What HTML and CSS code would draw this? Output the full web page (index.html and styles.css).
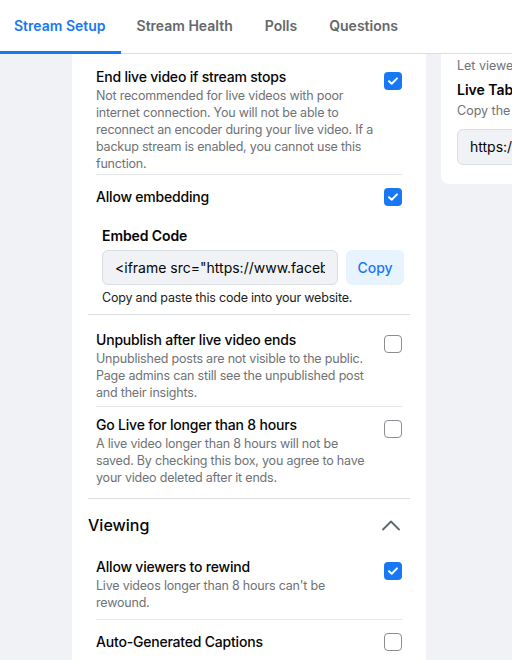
FILE: index.html
```html
<!DOCTYPE html>
<html lang="en">
  <head>
    <meta charset="UTF-8" />
    <meta name="viewport" content="width=device-width, initial-scale=1.0" />
    <title>Live Producer</title>
    <link rel="stylesheet" href="styles.css">
  </head>
  <body>
    <nav class="tabs">
      <a class="tab active" href="#">Stream Setup</a>
      <a class="tab" href="#">Stream Health</a>
      <a class="tab" href="#">Polls</a>
      <a class="tab" href="#">Questions</a>
    </nav>

    <div class="page">
      <main class="card main-card">
        <section class="group">
          <div class="setting first">
            <div class="setting-text">
              <div class="setting-title">End live video if stream stops</div>
              <p class="setting-desc">Not recommended for live videos with poor internet connection. You will not be able to reconnect an encoder during your live video. If a backup stream is enabled, you cannot use this function.</p>
            </div>
            <span class="check on">
              <svg viewBox="0 0 18 18" width="18" height="18"><path d="M5 9.3l2.7 2.5L13 6.4" fill="none" stroke="#fff" stroke-width="2" stroke-linecap="round" stroke-linejoin="round"/></svg>
            </span>
          </div>

          <div class="setting stacked">
            <div class="setting-head">
              <div class="setting-title">Allow embedding</div>
              <span class="check on">
                <svg viewBox="0 0 18 18" width="18" height="18"><path d="M5 9.3l2.7 2.5L13 6.4" fill="none" stroke="#fff" stroke-width="2" stroke-linecap="round" stroke-linejoin="round"/></svg>
              </span>
            </div>
            <div class="embed">
              <label class="embed-label" for="embedCode">Embed Code</label>
              <div class="embed-row">
                <input class="embed-input" id="embedCode" type="text" readonly value='<iframe src="https://www.facebook.com/plugins/video.php?href=https%3A%2F%2Fwww.facebook.com%2F" width="1280" height="720"></iframe>' />
                <button class="copy-btn" type="button">Copy</button>
              </div>
              <p class="embed-help">Copy and paste this code into your website.</p>
            </div>
          </div>
        </section>

        <section class="group">
          <div class="setting unpublish">
            <div class="setting-text">
              <div class="setting-title">Unpublish after live video ends</div>
              <p class="setting-desc">Unpublished posts are not visible to the public. Page admins can still see the unpublished post and their insights.</p>
            </div>
            <span class="check"></span>
          </div>

          <div class="setting longer">
            <div class="setting-text">
              <div class="setting-title">Go Live for longer than 8 hours</div>
              <p class="setting-desc">A live video longer than 8 hours will not be saved. By checking this box, you agree to have your video deleted after it ends.</p>
            </div>
            <span class="check"></span>
          </div>
        </section>

        <section class="group open">
          <div class="group-head">
            <h2 class="group-title">Viewing</h2>
            <svg class="chevron" viewBox="0 0 20 12" width="20" height="12"><path d="M2 10.5L10 2.5l8 8" fill="none" stroke="#606770" stroke-width="1.8" stroke-linecap="round" stroke-linejoin="round"/></svg>
          </div>

          <div class="setting">
            <div class="setting-text">
              <div class="setting-title">Allow viewers to rewind</div>
              <p class="setting-desc">Live videos longer than 8 hours can't be rewound.</p>
            </div>
            <span class="check on">
              <svg viewBox="0 0 18 18" width="18" height="18"><path d="M5 9.3l2.7 2.5L13 6.4" fill="none" stroke="#fff" stroke-width="2" stroke-linecap="round" stroke-linejoin="round"/></svg>
            </span>
          </div>

          <div class="setting single">
            <div class="setting-text">
              <div class="setting-title">Auto-Generated Captions</div>
            </div>
            <span class="check"></span>
          </div>
        </section>
      </main>

      <aside class="card side-card">
        <p class="side-desc">Let viewers watch your live video on your Page's Live tab.</p>
        <div class="side-title">Live Tab URL</div>
        <p class="side-desc">Copy the link to share your Page's Live tab.</p>
        <div class="side-input">https://www.facebook.com/pg/yourpage/live_videos/</div>
      </aside>
    </div>
  </body>
</html>
```

FILE: styles.css
```css
body {
  margin: 0;
  height: 660px;
  overflow: hidden;
  background-color: #f0f2f5;
  font-family: Inter, "Helvetica Neue", Arial, sans-serif;
  color: #050505;
}

/* tabs */

.tabs {
  display: flex;
  height: 53px;
  background-color: #fff;
  border-bottom: 1px solid #dadde1;
}

.tab {
  display: flex;
  align-items: center;
  margin-bottom: -1px;
  padding: 0 16px;
  border-bottom: 3px solid transparent;
  font-size: 14px;
  font-weight: 600;
  color: #65676b;
  text-decoration: none;
}

.tab:first-child {
  padding-left: 14px;
  padding-right: 15px;
}

.tab.active {
  color: #1877f2;
  border-bottom-color: #1877f2;
}

/* layout */

.page {
  display: flex;
  align-items: flex-start;
  gap: 15px;
  padding-left: 72px;
}

.card {
  flex: none;
  box-sizing: border-box;
  background-color: #fff;
}

.main-card {
  width: 354px;
  min-height: 606px;
  padding: 0 16px;
}

.side-card {
  width: 320px;
  padding: 3px 16px 19px;
  border-radius: 0 0 8px 8px;
}

/* settings */

.group {
  border-bottom: 1px solid #dadde1;
}

.group.open {
  border-bottom: none;
}

.setting {
  display: flex;
  justify-content: space-between;
  gap: 6px;
  margin: 0 8px;
  padding: 12px 0 8px;
  border-bottom: 1px solid #e4e6eb;
}

.setting:last-child {
  border-bottom: none;
}

.setting.first {
  padding-top: 13px;
  padding-bottom: 2px;
}

.setting.unpublish {
  padding-top: 15px;
  padding-bottom: 5px;
}

.setting.longer {
  padding-top: 8px;
  padding-bottom: 12px;
}

.setting.single {
  align-items: center;
}

.setting.stacked {
  display: block;
}

.setting-head {
  display: flex;
  justify-content: space-between;
  align-items: center;
}

.setting-text {
  max-width: 282px;
}

.setting-title {
  font-size: 14px;
  line-height: 20px;
  font-weight: 500;
  letter-spacing: -0.2px;
}

.setting-desc {
  margin: 0;
  font-size: 12.5px;
  line-height: 17px;
  letter-spacing: -0.2px;
  color: #6f7276;
}

.check {
  flex: none;
  box-sizing: border-box;
  width: 18px;
  height: 18px;
  margin-top: 5px;
  border: 1.5px solid #8a8d91;
  border-radius: 4px;
}

.check.on {
  border: none;
  background-color: #1877f2;
}

.check svg {
  display: block;
}

.setting-head .check,
.setting.single .check {
  margin-top: 0;
}

/* embed code */

.embed {
  margin: 19px -2px 0 6px;
}

.embed-label {
  display: block;
  margin-bottom: 4px;
  font-size: 14px;
  line-height: 20px;
  font-weight: 600;
  letter-spacing: -0.1px;
}

.embed-row {
  display: flex;
  gap: 8px;
}

.embed-input {
  flex: 1;
  min-width: 0;
  height: 35px;
  box-sizing: border-box;
  padding: 0 12px;
  border: 1px solid #dadde1;
  border-radius: 6px;
  background-color: #f0f2f5;
  font-family: inherit;
  font-size: 14px;
  color: #050505;
}

.copy-btn {
  width: 58px;
  height: 35px;
  border: none;
  border-radius: 6px;
  background-color: #e7f3ff;
  font-family: inherit;
  font-size: 14px;
  font-weight: 500;
  color: #1877f2;
  cursor: pointer;
}

.embed-help {
  margin: 4px 0 0;
  font-size: 12.5px;
  line-height: 17px;
  letter-spacing: -0.2px;
  color: #1c1e21;
}

/* viewing section */

.group-head {
  display: flex;
  justify-content: space-between;
  align-items: center;
  height: 46px;
  padding: 15px 9px 9px 0;
  box-sizing: border-box;
}

.group-title {
  margin: 0;
  font-size: 16px;
  line-height: 22px;
  font-weight: 500;
}

.chevron {
  display: block;
}

/* side card */

.side-desc {
  margin: 0;
  font-size: 12.5px;
  line-height: 17px;
  color: #6f7276;
  white-space: nowrap;
}

.side-title {
  margin: 6px 0 2px;
  font-size: 14px;
  line-height: 20px;
  font-weight: 600;
  white-space: nowrap;
}

.side-input {
  margin-top: 10px;
  height: 34px;
  padding: 0 12px;
  border: 1px solid #dadde1;
  border-radius: 6px;
  background-color: #f0f2f5;
  font-size: 14px;
  line-height: 34px;
  white-space: nowrap;
  overflow: hidden;
}
```
